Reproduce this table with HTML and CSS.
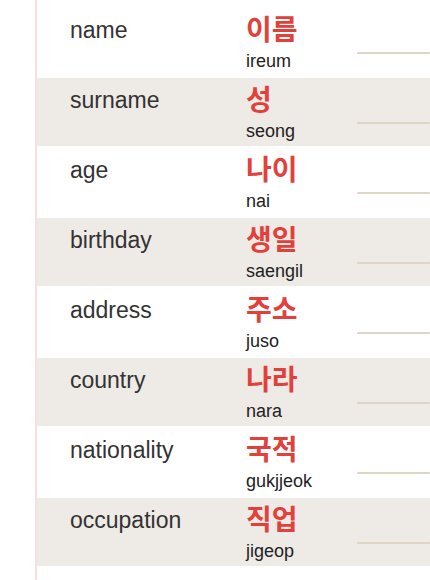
FILE: index.html
```html
<!DOCTYPE html>
<html lang="en">
<head>
<meta charset="utf-8">
<link rel="stylesheet" href="styles.css">
</head>
<body>
<div class="sheet">
  <div class="row"><div class="label">name</div><div class="ko"><div class="hangul">이름</div><div class="roman">ireum</div></div><div class="blank"></div></div>
  <div class="row shaded"><div class="label">surname</div><div class="ko"><div class="hangul">성</div><div class="roman">seong</div></div><div class="blank"></div></div>
  <div class="row"><div class="label">age</div><div class="ko"><div class="hangul">나이</div><div class="roman">nai</div></div><div class="blank"></div></div>
  <div class="row shaded"><div class="label">birthday</div><div class="ko"><div class="hangul">생일</div><div class="roman">saengil</div></div><div class="blank"></div></div>
  <div class="row"><div class="label">address</div><div class="ko"><div class="hangul">주소</div><div class="roman">juso</div></div><div class="blank"></div></div>
  <div class="row shaded"><div class="label">country</div><div class="ko"><div class="hangul">나라</div><div class="roman">nara</div></div><div class="blank"></div></div>
  <div class="row"><div class="label">nationality</div><div class="ko"><div class="hangul">국적</div><div class="roman">gukjjeok</div></div><div class="blank"></div></div>
  <div class="row shaded"><div class="label">occupation</div><div class="ko"><div class="hangul">직업</div><div class="roman">jigeop</div></div><div class="blank"></div></div>
</div>
</body>
</html>
```
FILE: styles.css
```css
html, body {
  margin: 0;
  padding: 0;
  background: #ffffff;
  overflow: hidden;
}
body {
  font-family: "Liberation Sans", Arial, sans-serif;
}
.sheet {
  margin-left: 35px;
  border-left: 2px solid #f6e0de;
  min-height: 100vh;
  padding-top: 8px;
  display: flex;
  flex-direction: column;
  gap: 2px;
  box-sizing: border-box;
}
.row {
  height: 68px;
  display: grid;
  grid-template-columns: 176px 111px 1fr;
  padding-left: 33px;
}
.row.shaded {
  background: #eeeae6;
}
.label {
  font-size: 23px;
  line-height: 23px;
  color: #333333;
  padding-top: 11px;
}
.ko {
  display: flex;
  flex-direction: column;
}
.hangul {
  font-family: "Noto Sans CJK KR", sans-serif;
  font-weight: 700;
  font-size: 28px;
  line-height: 28px;
  color: #e2413b;
  padding-top: 6px;
}
.roman {
  font-size: 18px;
  line-height: 18px;
  color: #222222;
  margin-top: 10px;
}
.blank {
  margin-top: 44px;
  height: 2px;
  background: #ddd5c6;
  border-radius: 1px;
}
```
